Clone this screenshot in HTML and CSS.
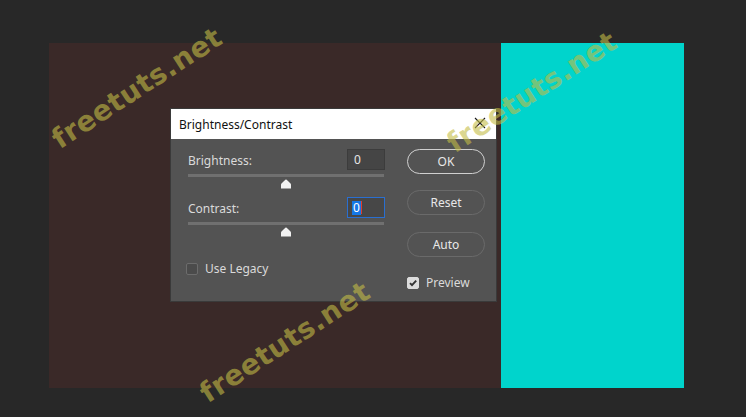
FILE: index.html
```html
<!DOCTYPE html>
<html>
<head>
<meta charset="utf-8">
<link rel="stylesheet" href="styles.css">
</head>
<body>
<div class="stage">
  <div class="canvas">
    <div class="doc"></div>
    <div class="swatch"></div>
    <div class="dialog">
      <div class="titlebar">
        <span class="title">Brightness/Contrast</span>
        <svg class="close" width="12" height="12" viewBox="0 0 12 12"><path d="M1 1 L11 11 M11 1 L1 11" stroke="#1a1a1a" stroke-width="1.1" fill="none"/></svg>
      </div>
      <div class="body">
        <div class="left">
          <div class="row">
            <span class="label">Brightness:</span>
            <div class="field">0</div>
          </div>
          <div class="slider">
            <div class="track"></div>
            <svg class="thumb" width="12" height="10" viewBox="0 0 12 10"><path d="M1 9.5 L1 5.5 Q1 5 1.5 4.5 L5.3 0.8 Q6 0.2 6.7 0.8 L10.5 4.5 Q11 5 11 5.5 L11 9.5 Z" fill="#f2f2f2"/></svg>
          </div>
          <div class="row row2">
            <span class="label">Contrast:</span>
            <div class="field focus"><span class="sel">0</span><span class="caret"></span></div>
          </div>
          <div class="slider">
            <div class="track"></div>
            <svg class="thumb" width="12" height="10" viewBox="0 0 12 10"><path d="M1 9.5 L1 5.5 Q1 5 1.5 4.5 L5.3 0.8 Q6 0.2 6.7 0.8 L10.5 4.5 Q11 5 11 5.5 L11 9.5 Z" fill="#f2f2f2"/></svg>
          </div>
          <label class="check legacy"><span class="box"></span><span class="label">Use Legacy</span></label>
        </div>
        <div class="right">
          <div class="btn primary">OK</div>
          <div class="btn">Reset</div>
          <div class="btn">Auto</div>
          <label class="check preview"><span class="box on"><svg width="12" height="12" viewBox="0 0 12 12"><path d="M3 6.2 L5 8.2 L9.2 3.6" stroke="#333" stroke-width="1.9" fill="none"/></svg></span><span class="label">Preview</span></label>
        </div>
      </div>
    </div>
  </div>
  <span class="wm wm1">freetuts.net</span>
  <span class="wm wm2">freetuts.net</span>
  <span class="wm wm3">freetuts.net</span>
</div>
</body>
</html>
```

FILE: styles.css
```css
html, body {
  margin: 0;
  padding: 0;
  background: #282828;
}
.stage {
  position: relative;
  width: 746px;
  height: 417px;
  box-sizing: border-box;
  padding: 43px 0 0 49px;
  background: #282828;
  overflow: hidden;
  font-family: "Noto Sans", "Open Sans", sans-serif;
}
.canvas {
  position: relative;
  display: flex;
  height: 345px;
}
.doc {
  width: 452px;
  background: #3a2928;
}
.swatch {
  width: 183px;
  background: #00d4cc;
}
.dialog {
  position: absolute;
  left: 122px;
  top: 66px;
  width: 325px;
  height: 192px;
  background: #535353;
  box-shadow: 0 0 0 1px #3a3a3a;
  display: flex;
  flex-direction: column;
}
.titlebar {
  height: 30px;
  background: #ffffff;
  display: flex;
  align-items: center;
  justify-content: space-between;
  padding: 0 10px 0 8px;
}
.title {
  font-size: 12px;
  color: #111;
}
.close {
  margin-top: -2px;
}
.body {
  display: flex;
  gap: 22px;
  padding: 10px 0 0 17px;
}
.left {
  width: 197px;
  display: flex;
  flex-direction: column;
}
.row {
  display: flex;
  justify-content: space-between;
  align-items: center;
  height: 21px;
}
.row > .label {
  margin-top: 1px;
}
.row2 {
  margin-top: 7px;
}
.label {
  font-size: 12px;
  color: #dadada;
}
.field {
  width: 38px;
  height: 21px;
  box-sizing: border-box;
  background: #454545;
  border: 1px solid #3c3c3c;
  color: #e6e6e6;
  font-size: 12px;
  padding-left: 6px;
  display: flex;
  align-items: center;
}
.field.focus {
  border: 1px solid #2a6fd0;
  background: #474747;
  padding-left: 4px;
}
.sel {
  background: #1577e6;
  color: #ffffff;
  padding: 0 1px;
  line-height: 14px;
}
.caret {
  width: 1px;
  height: 13px;
  background: #e23b2a;
}
.slider {
  position: relative;
  height: 20px;
}
.track {
  position: absolute;
  left: 0;
  right: 1px;
  top: 4px;
  height: 3px;
  background: #707070;
}
.thumb {
  position: absolute;
  left: 92px;
  top: 9px;
}
.check {
  display: flex;
  align-items: center;
  gap: 7px;
}
.legacy {
  margin-top: 22px;
  margin-left: -2px;
}
.box {
  width: 12px;
  height: 12px;
  box-sizing: border-box;
  border: 1px solid #6c6c6c;
  background: #4b4b4b;
  border-radius: 2px;
  display: flex;
}
.box.on {
  background: #dcdcdc;
  border-color: #dcdcdc;
}
.box.on svg {
  margin: -1px;
}
.right {
  width: 78px;
  display: flex;
  flex-direction: column;
}
.btn {
  height: 25px;
  box-sizing: border-box;
  border: 1.5px solid #6a6a6a;
  border-radius: 13px;
  display: flex;
  align-items: center;
  justify-content: center;
  font-size: 12px;
  color: #e8e8e8;
  margin-bottom: 16px;
}
.btn.primary {
  border-color: #d0d0d0;
}
.btn:nth-child(2) {
  margin-bottom: 17px;
}
.btn:nth-child(3) {
  margin-bottom: 19px;
}
.preview {
  margin-top: -2px;
}
.wm {
  position: absolute;
  font-family: "DejaVu Sans", sans-serif;
  font-weight: bold;
  font-size: 28px;
  color: rgba(195, 188, 70, 0.6);
  white-space: nowrap;
  transform: translate(-50%, -50%) rotate(-33deg);
  letter-spacing: 0.5px;
}
.wm1 { left: 137px; top: 88px; }
.wm2 { left: 532px; top: 92px; }
.wm3 { left: 285px; top: 342px; }
```
